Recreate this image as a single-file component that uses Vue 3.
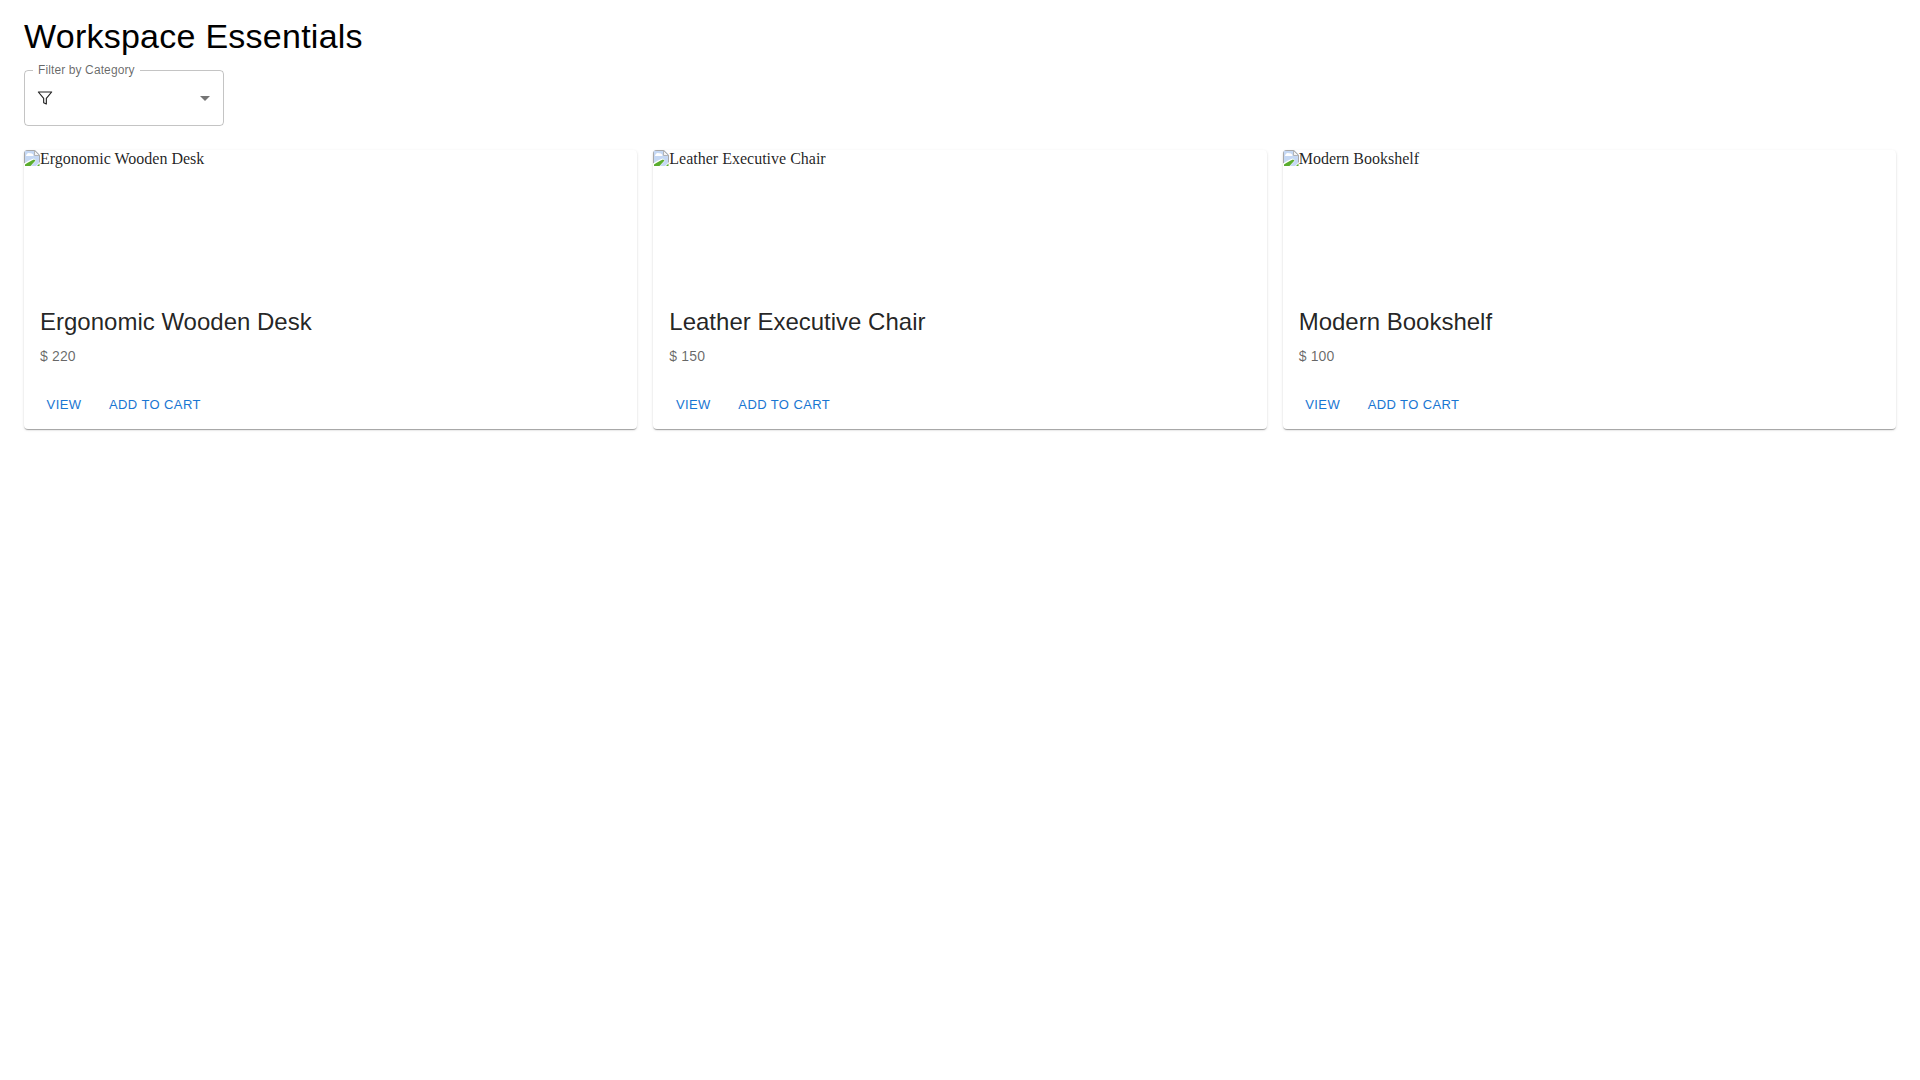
<script setup>
const products = [
  { name: 'Ergonomic Wooden Desk', price: '$ 220' },
  { name: 'Leather Executive Chair', price: '$ 150' },
  { name: 'Modern Bookshelf', price: '$ 100' },
]
</script>

<template>
  <main class="page">
    <h1 class="title">Workspace Essentials</h1>
    <div class="select">
      <fieldset class="outline"><legend>Filter by Category</legend></fieldset>
      <svg class="filter" width="16" height="16" viewBox="0 0 24 24" fill="none" stroke="currentColor" stroke-width="1.700" stroke-linecap="round" stroke-linejoin="round">
        <polygon points="22 3 2 3 10 12.46 10 19 14 21 14 12.46 22 3" />
      </svg>
      <svg class="arrow" width="24" height="24" viewBox="0 0 24 24"><path d="M7 10l5 5 5-5z" fill="currentColor" /></svg>
    </div>
    <section class="grid">
      <article v-for="p in products" :key="p.name" class="card">
        <div class="media">
          <svg class="broken" width="16" height="16" viewBox="0 0 16 16">
            <path d="M0 0H11L16 5V16H0Z" fill="#c5d8f4" />
            <path d="M0.500 15.500V0.500H10.800L15.500 5.200V15.500" fill="none" stroke="#a8a8a8" />
            <path d="M10.500 0.500V5.500H15.500Z" fill="#f4f4f4" stroke="#a8a8a8" stroke-width="0.800" />
            <path d="M2 6c.500-2.500 2.500-3.500 4-2.500 1.500-.500 3.500.500 3.500 2.500Z" fill="#fff" />
            <path d="M0 16V13.500C3 11.500 7 9 10 8.500L12 10.500 7 16Z" fill="#fff" />
            <path d="M1 16V14.500C4 12.500 7 10.500 10 9.500L11.500 10.500 6.500 16Z" fill="#5aad2e" />
            <path d="M12 16L16 12V16Z" fill="#fff" />
            <path d="M13 16L15.500 13.500V16Z" fill="#5aad2e" />
          </svg>{{ p.name }}
        </div>
        <div class="content">
          <h2 class="name">{{ p.name }}</h2>
          <p class="price">{{ p.price }}</p>
        </div>
        <div class="actions">
          <button class="btn">View</button>
          <button class="btn">Add to Cart</button>
        </div>
      </article>
    </section>
  </main>
</template>

<style scoped>
.page {
  padding: 16px 24px;
  font-family: "Liberation Sans", Arial, sans-serif;
  color: rgba(0, 0, 0, 0.87);
}
.title {
  margin: 0 0 12px;
  font-size: 34px;
  font-weight: 400;
  line-height: 1.235;
  letter-spacing: 0.25px;
  color: #000;
}
.select {
  position: relative;
  box-sizing: border-box;
  width: 200px;
  height: 56px;
  display: flex;
  align-items: center;
  padding-left: 13px;
}
.outline {
  position: absolute;
  inset: -5px 0 0;
  margin: 0;
  padding: 0 8px;
  border: 1px solid rgba(0, 0, 0, 0.23);
  border-radius: 4px;
  min-width: 0;
}
.outline legend {
  padding: 0 5px;
  font-size: 12px;
  line-height: 11px;
  letter-spacing: 0.11px;
  color: rgba(0, 0, 0, 0.6);
  white-space: nowrap;
}
.filter {
  color: rgba(0, 0, 0, 0.87);
}
.arrow {
  position: absolute;
  right: 7px;
  top: 16px;
  color: rgba(0, 0, 0, 0.54);
}
.grid {
  margin-top: 24px;
  display: grid;
  grid-template-columns: repeat(3, minmax(0, 1fr));
  gap: 16px;
}
.card {
  background: #fff;
  border-radius: 4px;
  overflow: hidden;
  box-shadow: 0 2px 1px -1px rgba(0, 0, 0, 0.2), 0 1px 1px 0 rgba(0, 0, 0, 0.14), 0 1px 3px 0 rgba(0, 0, 0, 0.12);
}
.media {
  height: 140px;
  font-family: "Liberation Serif", "Times New Roman", serif;
  font-size: 16px;
  line-height: 18px;
}
.broken {
  vertical-align: top;
}
.content {
  padding: 16px;
}
.name {
  margin: 0 0 8.4px;
  font-size: 24px;
  font-weight: 400;
  line-height: 1.334;
}
.price {
  margin: 0;
  font-size: 14px;
  line-height: 1.43;
  letter-spacing: 0.15px;
  color: rgba(0, 0, 0, 0.6);
}
.actions {
  display: flex;
  align-items: center;
  gap: 8px;
  padding: 8px;
}
.btn {
  min-width: 64px;
  padding: 4px 5px;
  border: 0;
  background: none;
  font-family: inherit;
  font-size: 13px;
  line-height: 1.75;
  letter-spacing: 0.4px;
  text-transform: uppercase;
  color: #1976d2;
  cursor: pointer;
}
</style>
